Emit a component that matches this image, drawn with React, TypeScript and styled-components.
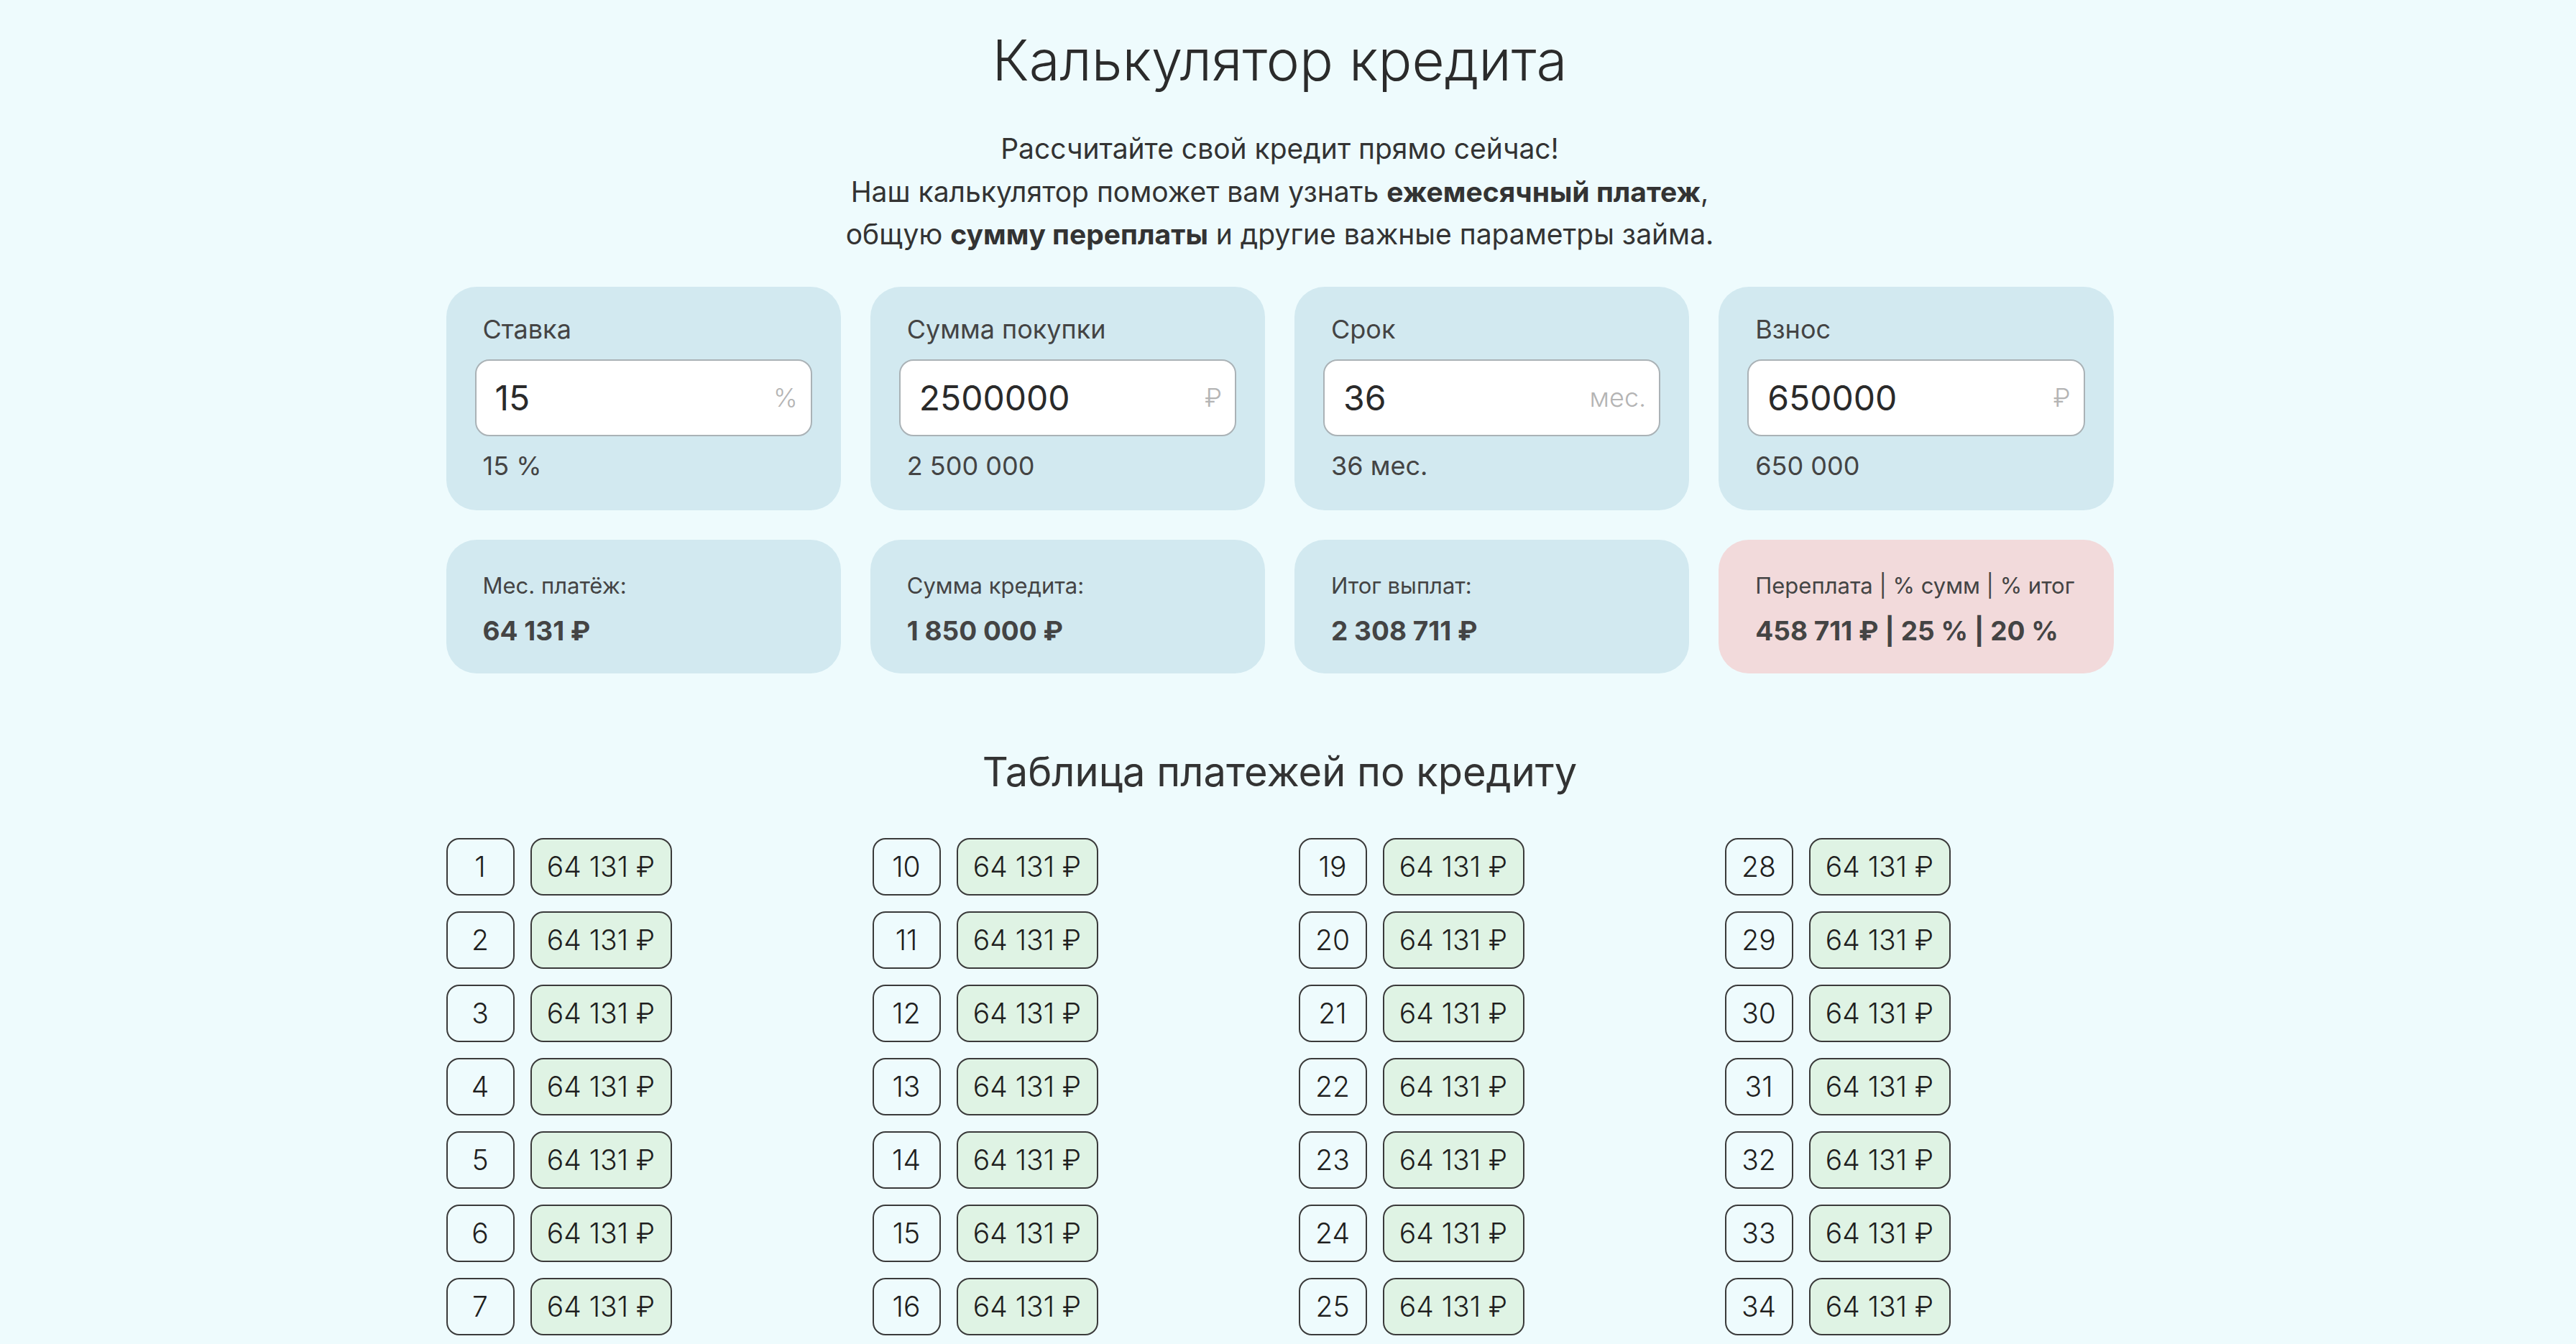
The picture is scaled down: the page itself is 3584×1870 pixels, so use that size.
import React from 'react';
import styled, { createGlobalStyle } from 'styled-components';

const GlobalStyle = createGlobalStyle`
  html, body {
    background: #eefbfd;
  }
  body {
    margin: 0;
    font-family: Inter, "Noto Sans", "Liberation Sans", sans-serif;
    color: #333;
  }
  ::-webkit-scrollbar {
    width: 10px;
  }
  ::-webkit-scrollbar-track {
    background: transparent;
    margin: 90px 0;
  }
  ::-webkit-scrollbar-thumb {
    background: #d2e9f0;
    border-radius: 10px 0 0 10px;
  }
`;

const Page = styled.main`
  max-width: 2320px;
  margin: 0 auto;
  padding: 36px 23px 280px 0;
`;

const Heading = styled.h1`
  margin: 0;
  font-size: 78px;
  line-height: 96px;
  font-weight: 300;
  text-align: center;
  color: #2b2b2b;
`;

const Intro = styled.p`
  margin: 45px 0 0;
  font-size: 39px;
  line-height: 59.5px;
  text-align: center;
  color: #333;

  strong {
    font-weight: 700;
  }
`;

const Grid = styled.section<{ $top: number }>`
  display: grid;
  grid-template-columns: repeat(4, 1fr);
  gap: 41px;
  margin-top: ${p => p.$top}px;
`;

const ParamCard = styled.div`
  display: flex;
  flex-direction: column;
  gap: 20px;
  padding: 38px 40px 40px;
  border-radius: 42px;
  background: #d2e9f0;
`;

const ParamLabel = styled.label`
  padding: 0 11px;
  font-size: 36px;
  line-height: 43px;
  color: #444;
`;

const Field = styled.div`
  position: relative;
`;

const Input = styled.input`
  box-sizing: border-box;
  width: 100%;
  height: 107px;
  padding: 0 90px 0 26px;
  border: 2px solid #aab2b6;
  border-radius: 20px;
  background: #fff;
  font-family: inherit;
  font-size: 48px;
  color: #2a2a2a;
  outline: none;
`;

const Unit = styled.span`
  position: absolute;
  right: 20px;
  top: 50%;
  transform: translateY(-50%);
  font-size: 36px;
  font-weight: 300;
  color: #b4b4b4;
  pointer-events: none;
`;

const Hint = styled.div`
  padding: 0 11px;
  font-size: 36px;
  line-height: 43px;
  color: #444;
`;

const ResultCard = styled.div<{ $accent?: boolean }>`
  display: flex;
  flex-direction: column;
  gap: 23px;
  padding: 45px 51px 37px;
  border-radius: 42px;
  background: ${p => (p.$accent ? '#f2dadb' : '#d2e9f0')};
`;

const ResultLabel = styled.div`
  font-size: 31px;
  line-height: 37px;
  color: #444;
`;

const ResultValue = styled.div`
  font-size: 37px;
  line-height: 44px;
  font-weight: 700;
  color: #444;
`;

const TableTitle = styled.h2`
  margin: 104px 0 0;
  font-size: 56px;
  line-height: 67px;
  font-weight: 400;
  text-align: center;
  color: #333;
`;

const Schedule = styled.ol`
  display: grid;
  grid-template-columns: repeat(4, 1fr);
  grid-template-rows: repeat(9, 80px);
  grid-auto-flow: column;
  column-gap: 52px;
  row-gap: 22px;
  margin: 58px 0 0;
  padding: 0;
  list-style: none;
`;

const Row = styled.li`
  display: flex;
  gap: 22px;
`;

const Cell = styled.span<{ $sum?: boolean }>`
  box-sizing: border-box;
  display: flex;
  align-items: center;
  justify-content: center;
  width: ${p => (p.$sum ? 197 : 95)}px;
  height: 80px;
  border: 2px solid #3a3a3a;
  border-radius: 18px;
  background: ${p => (p.$sum ? '#dff3e4' : 'transparent')};
  font-size: 39px;
  font-weight: 300;
  color: #1f1f1f;
`;

const fmt = (n: number) => Math.round(n).toString().replace(/\B(?=(\d{3})+(?!\d))/g, '\u00a0');

const rate = 15;
const price = 2500000;
const months = 36;
const deposit = 650000;

const credit = price - deposit;
const r = rate / 100 / 12;
const monthly = (credit * r) / (1 - Math.pow(1 + r, -months));
const total = Math.round(monthly * months);
const overpay = total - credit;

const params = [
  { label: 'Ставка', value: rate, unit: '%', hint: `${rate} %` },
  { label: 'Сумма покупки', value: price, unit: '₽', hint: fmt(price) },
  { label: 'Срок', value: months, unit: 'мес.', hint: `${months} мес.` },
  { label: 'Взнос', value: deposit, unit: '₽', hint: fmt(deposit) },
];

const results = [
  { label: 'Мес. платёж:', value: `${fmt(monthly)} ₽` },
  { label: 'Сумма кредита:', value: `${fmt(credit)} ₽` },
  { label: 'Итог выплат:', value: `${fmt(total)} ₽` },
  {
    label: 'Переплата | % сумм | % итог',
    value: `${fmt(overpay)} ₽ | ${Math.round((overpay / credit) * 100)} % | ${Math.round((overpay / total) * 100)} %`,
    accent: true,
  },
];

export default function App() {
  return (
    <>
      <GlobalStyle />
      <Page>
        <Heading>Калькулятор кредита</Heading>
        <Intro>
          Рассчитайте свой кредит прямо сейчас!
          <br />
          Наш калькулятор поможет вам узнать <strong>ежемесячный платеж</strong>,
          <br />
          общую <strong>сумму переплаты</strong> и другие важные параметры займа.
        </Intro>

        <Grid $top={43}>
          {params.map(p => (
            <ParamCard key={p.label}>
              <ParamLabel>{p.label}</ParamLabel>
              <Field>
                <Input defaultValue={p.value} />
                <Unit>{p.unit}</Unit>
              </Field>
              <Hint>{p.hint}</Hint>
            </ParamCard>
          ))}
        </Grid>

        <Grid $top={41}>
          {results.map(item => (
            <ResultCard key={item.label} $accent={item.accent}>
              <ResultLabel>{item.label}</ResultLabel>
              <ResultValue>{item.value}</ResultValue>
            </ResultCard>
          ))}
        </Grid>

        <TableTitle>Таблица платежей по кредиту</TableTitle>
        <Schedule>
          {Array.from({ length: months }, (_, i) => (
            <Row key={i}>
              <Cell>{i + 1}</Cell>
              <Cell $sum>{fmt(monthly)} ₽</Cell>
            </Row>
          ))}
        </Schedule>
      </Page>
    </>
  );
}
